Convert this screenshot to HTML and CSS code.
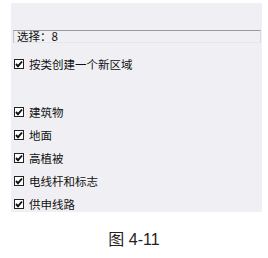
FILE: index.html
```html
<!DOCTYPE html>
<html lang="zh-CN">
<head>
  <meta charset="UTF-8">
  <title>图 4-11</title>
  <link rel="stylesheet" href="styles.css">
</head>
<body>
  <div class="panel">
    <div class="field">选择：8</div>
    <label class="row first"><span class="box"><svg width="8" height="8" viewBox="0 0 8 8"><path d="M1 4 L3 6.2 L7 1.5" fill="none" stroke="#111" stroke-width="1.9"/></svg></span>按类创建一个新区域</label>

    <div class="group">
      <label class="row"><span class="box"><svg width="8" height="8" viewBox="0 0 8 8"><path d="M1 4 L3 6.2 L7 1.5" fill="none" stroke="#111" stroke-width="1.9"/></svg></span>建筑物</label>
      <label class="row"><span class="box"><svg width="8" height="8" viewBox="0 0 8 8"><path d="M1 4 L3 6.2 L7 1.5" fill="none" stroke="#111" stroke-width="1.9"/></svg></span>地面</label>
      <label class="row"><span class="box"><svg width="8" height="8" viewBox="0 0 8 8"><path d="M1 4 L3 6.2 L7 1.5" fill="none" stroke="#111" stroke-width="1.9"/></svg></span>高植被</label>
      <label class="row"><span class="box"><svg width="8" height="8" viewBox="0 0 8 8"><path d="M1 4 L3 6.2 L7 1.5" fill="none" stroke="#111" stroke-width="1.9"/></svg></span>电线杆和标志</label>
      <label class="row last"><span class="box"><svg width="8" height="8" viewBox="0 0 8 8"><path d="M1 4 L3 6.2 L7 1.5" fill="none" stroke="#111" stroke-width="1.9"/></svg></span>供申线路</label>
    </div>
  </div>

  <p class="caption">图 4-11</p>
</body>
</html>
```

FILE: styles.css
```css
body {
  margin: 0;
  background: #fff;
  font-family: "Noto Sans CJK SC", "Liberation Sans", sans-serif;
  color: #222;
}

.panel {
  margin: 3px 0 0 11px;
  width: 251px;
  height: 209px;
  padding: 27px 2px 0 2px;
  box-sizing: border-box;
  background-color: #f0f0f4;
}

.field {
  width: 248px;
  height: 13px;
  box-sizing: border-box;
  border-top: 1px solid #9a9a9e;
  border-left: 1px solid #c4c4c8;
  border-right: 1px solid #dcdce0;
  border-bottom: 1px solid #e6e6ea;
  padding-left: 3px;
  font-size: 11.5px;
  line-height: 11px;
  color: #111;
}

.row {
  display: flex;
  align-items: center;
  height: 23px;
  font-size: 11.5px;
  color: #111;
}

.row.first {
  margin-top: 9px;
}

.row.last {
  height: 21px;
  margin-top: 1px;
}

.group {
  margin-top: 25px;
}

.box {
  display: flex;
  align-items: center;
  justify-content: center;
  width: 10px;
  height: 10px;
  box-sizing: border-box;
  border: 1px solid #222;
  background: #fff;
  margin: 0 5px 0 1px;
}

.caption {
  margin: 14px 0 0 0;
  text-align: center;
  font-size: 16px;
  color: #222;
  font-family: "Liberation Sans", "Noto Sans CJK SC", sans-serif;
}
```
